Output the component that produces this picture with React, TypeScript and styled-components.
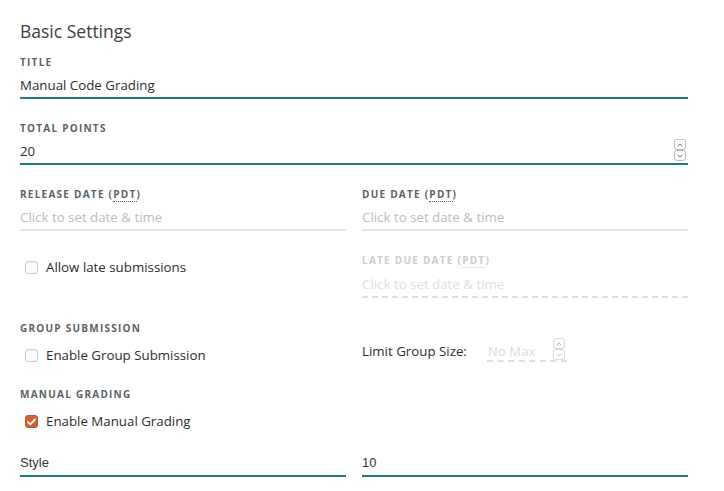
import React from "react";
import styled, { createGlobalStyle, css } from "styled-components";

const Global = createGlobalStyle`
  html, body { margin: 0; padding: 0; background: #fff; }
  body { font-family: "Open Sans", "Lato", sans-serif; color: #2e3133; }
  * { box-sizing: border-box; }
`;

const Page = styled.div`
  width: 724px;
  padding: 20px 36px 0 20px;
`;

const Heading = styled.h2`
  margin: 0 0 13px;
  font-size: 17.5px;
  line-height: 22px;
  font-weight: 400;
  color: #3b3f42;
`;

const Label = styled.div<{ $disabled?: boolean; $gap?: number }>`
  font-size: 10px;
  line-height: 14px;
  font-weight: 700;
  letter-spacing: 1.25px;
  text-transform: uppercase;
  color: ${(p) => (p.$disabled ? "#c9cdcf" : "#5b6266")};
  margin-bottom: ${(p) => p.$gap ?? 4}px;
`;

const Abbr = styled.span<{ $disabled?: boolean }>`
  border-bottom: 1px dotted ${(p) => (p.$disabled ? "#c9cdcf" : "#5b6266")};
`;

type Variant = "active" | "empty" | "disabled";

const InputBox = styled.div<{ $variant: Variant }>`
  position: relative;
  height: 26px;
  font-size: 13.3px;
  line-height: 24px;
  color: #2b2d2f;
  ${(p) =>
    p.$variant === "active"
      ? css`border-bottom: 2px solid #1d7c75;`
      : p.$variant === "empty"
      ? css`border-bottom: 2px solid #e0e5e5; color: #b9bdbf;`
      : css`
          height: 27px;
          line-height: 26px;
          border-bottom: 2px dashed #dadede;
          color: #dde0e1;
        `}
`;

const PlainInputBox = styled(InputBox)`
  font-family: "Liberation Sans", Arial, sans-serif;
  font-size: 13px;
  color: #333;
`;

const Field = styled.div<{ $mb?: number }>`
  margin-bottom: ${(p) => p.$mb ?? 22}px;
`;

const Row = styled.div<{ $mb?: number }>`
  display: grid;
  grid-template-columns: 1fr 1fr;
  column-gap: 16px;
  margin-bottom: ${(p) => p.$mb ?? 22}px;
`;

const CheckRow = styled.label<{ $mt?: number }>`
  display: flex;
  align-items: center;
  gap: 8px;
  height: 20px;
  margin-top: ${(p) => p.$mt ?? 0}px;
  padding-left: 5px;
  font-size: 13.3px;
  color: #2b2d2f;
`;

const Box = styled.span<{ $checked?: boolean }>`
  width: 13px;
  height: 13px;
  border-radius: 3px;
  display: inline-flex;
  align-items: center;
  justify-content: center;
  flex: none;
  margin-top: 1px;
  ${(p) =>
    p.$checked
      ? css`
          background: #cf6137;
          border: 1px solid #bf5630;
        `
      : css`
          background: #fbfbfb;
          border: 1px solid #c9cdcf;
          box-shadow: inset 0 1px 1px rgba(0, 0, 0, 0.06);
        `}
`;

const Spinner = styled.div`
  position: absolute;
  right: 2px;
  top: 0;
  display: flex;
  flex-direction: column;
`;

const SpinBtn = styled.span<{ $faded?: boolean }>`
  width: 12px;
  height: 11px;
  border: 1px solid ${(p) => (p.$faded ? "#d6d9da" : "#b9bdbf")};
  border-radius: 3px;
  background: #fff;
  display: flex;
  align-items: center;
  justify-content: center;
`;

const SizeRow = styled.div`
  display: flex;
  align-items: flex-start;
  gap: 20px;
  margin-top: 17px;
`;

const SizeLabel = styled.span`
  font-size: 13.3px;
  line-height: 18px;
  margin-top: 4px;
  color: #2b2d2f;
`;

const SizeInput = styled.div`
  position: relative;
  width: 80px;
  height: 24px;
  padding: 4px 0 0 1px;
  font-size: 13.3px;
  line-height: 18px;
  color: #d9dcdd;
  border-bottom: 2px dashed #dadede;
`;

const Check = () => (
  <svg width="9" height="8" viewBox="0 0 9 8">
    <path d="M1 4.2 L3.4 6.4 L8 1.4" fill="none" stroke="#fff" strokeWidth="1.8" strokeLinecap="round" strokeLinejoin="round" />
  </svg>
);

const Chevron = ({ up, color }: { up?: boolean; color: string }) => (
  <svg width="6" height="4" viewBox="0 0 6 4">
    <path d={up ? "M0.7 3.3 L3 1 L5.3 3.3" : "M0.7 0.7 L3 3 L5.3 0.7"} fill="none" stroke={color} strokeWidth="1" />
  </svg>
);

const Spin = ({ faded }: { faded?: boolean }) => (
  <Spinner>
    <SpinBtn $faded={faded}>
      <Chevron up color={faded ? "#b7bbbd" : "#6d7275"} />
    </SpinBtn>
    <SpinBtn $faded={faded}>
      <Chevron color={faded ? "#b7bbbd" : "#6d7275"} />
    </SpinBtn>
  </Spinner>
);

const Pdt = ({ children, disabled }: { children: React.ReactNode; disabled?: boolean }) => (
  <Label $disabled={disabled}>
    {children} (<Abbr $disabled={disabled}>PDT</Abbr>)
  </Label>
);

export default function App() {
  return (
    <>
      <Global />
      <Page>
        <Heading>Basic Settings</Heading>

        <Field>
          <Label>Title</Label>
          <InputBox $variant="active">Manual Code Grading</InputBox>
        </Field>

        <Field>
          <Label>Total Points</Label>
          <InputBox $variant="active">
            20
            <Spin />
          </InputBox>
        </Field>

        <Row>
          <div>
            <Pdt>Release Date</Pdt>
            <InputBox $variant="empty">Click to set date &amp; time</InputBox>
          </div>
          <div>
            <Pdt>Due Date</Pdt>
            <InputBox $variant="empty">Click to set date &amp; time</InputBox>
          </div>
        </Row>

        <Row $mb={23}>
          <div>
            <CheckRow $mt={4}>
              <Box />
              Allow late submissions
            </CheckRow>
          </div>
          <div>
            <Pdt disabled>Late Due Date</Pdt>
            <InputBox $variant="disabled">Click to set date &amp; time</InputBox>
          </div>
        </Row>

        <Row>
          <div>
            <Label $gap={10}>Group Submission</Label>
            <CheckRow>
              <Box />
              Enable Group Submission
            </CheckRow>
          </div>
          <SizeRow>
            <SizeLabel>Limit Group Size:</SizeLabel>
            <SizeInput>
              No Max
              <Spin faded />
            </SizeInput>
          </SizeRow>
        </Row>

        <Field $mb={20}>
          <Label $gap={10}>Manual Grading</Label>
          <CheckRow>
            <Box $checked>
              <Check />
            </Box>
            Enable Manual Grading
          </CheckRow>
        </Field>

        <Row>
          <PlainInputBox $variant="active">Style</PlainInputBox>
          <PlainInputBox $variant="active">10</PlainInputBox>
        </Row>
      </Page>
    </>
  );
}
